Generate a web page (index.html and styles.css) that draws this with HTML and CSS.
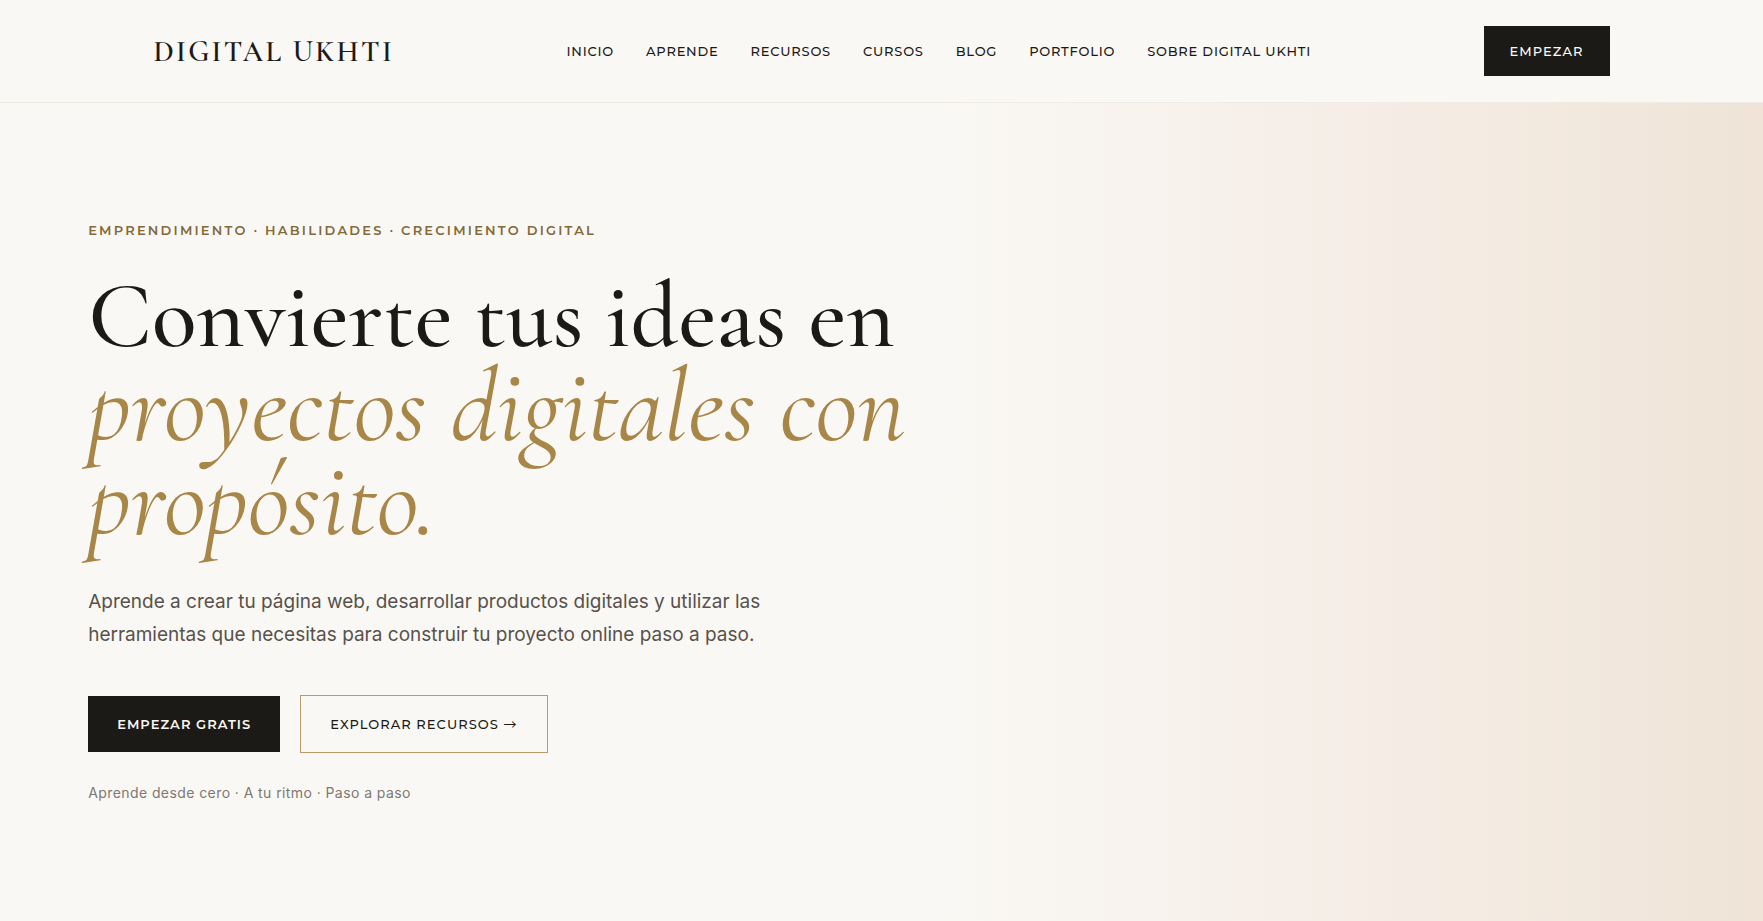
FILE: index.html
```html
<!DOCTYPE html>
<html lang="es">
<head>
  <meta charset="UTF-8">
  <meta name="viewport" content="width=device-width, initial-scale=1.0">
  <title>Digital Ukhti</title>
  <link rel="stylesheet" href="styles.css">
</head>
<body>

<header class="header">
  <div class="header-inner">
    <a class="logo" href="#">DIGITAL UKHTI</a>
    <nav class="nav">
      <a href="#">INICIO</a>
      <a href="#">APRENDE</a>
      <a href="#">RECURSOS</a>
      <a href="#">CURSOS</a>
      <a href="#">BLOG</a>
      <a href="#">PORTFOLIO</a>
      <a href="#">SOBRE DIGITAL UKHTI</a>
    </nav>
    <a class="btn btn-small" href="#">EMPEZAR</a>
  </div>
</header>

<main class="hero">
  <div class="hero-content">
    <p class="eyebrow">EMPRENDIMIENTO · HABILIDADES · CRECIMIENTO DIGITAL</p>
    <h1>Convierte tus ideas en <em>proyectos digitales con propósito.</em></h1>
    <p class="lead">Aprende a crear tu página web, desarrollar productos digitales y utilizar las herramientas que necesitas para construir tu proyecto online paso a paso.</p>
    <div class="actions">
      <a class="btn" href="#">EMPEZAR GRATIS</a>
      <a class="btn btn-outline" href="#">EXPLORAR RECURSOS <span class="arrow">→</span></a>
    </div>
    <p class="note">Aprende desde cero · A tu ritmo · Paso a paso</p>
  </div>
</main>

</body>
</html>
```

FILE: styles.css
```css
:root {
  --cream: #faf8f4;
  --ink: #1c1a17;
  --gold: #a88648;
  --serif: "Cormorant Garamond", "Liberation Serif", serif;
  --caps: Montserrat, Inter, sans-serif;
}
* {
  box-sizing: border-box;
  margin: 0;
  padding: 0;
}
body {
  display: flex;
  flex-direction: column;
  min-height: 100vh;
  background: var(--cream);
  color: var(--ink);
  font-family: Inter, sans-serif;
}
a {
  color: inherit;
  text-decoration: none;
}

/* Header */
.header {
  padding: 26px 5%;
  border-bottom: 1px solid #f0ebe3;
}
.header-inner {
  display: flex;
  align-items: center;
  justify-content: space-between;
  max-width: 1456px;
  margin: 0 auto;
}
.logo {
  font-family: var(--serif);
  font-size: 29px;
  font-weight: 600;
  letter-spacing: 0.08em;
}
.nav {
  display: flex;
  gap: 32px;
  font-family: var(--caps);
  font-size: 13px;
  font-weight: 500;
  letter-spacing: 0.06em;
}

/* Buttons */
.btn {
  padding: 20px 29px;
  background: var(--ink);
  color: var(--cream);
  font-family: var(--caps);
  font-size: 13px;
  font-weight: 600;
  line-height: 16px;
  letter-spacing: 0.08em;
}
.btn-small {
  padding: 17px 26px;
  font-weight: 500;
}
.btn-outline {
  border: 1px solid #b89b66;
  background: transparent;
  color: var(--ink);
  font-weight: 500;
}
.arrow {
  font-family: "Noto Sans CJK JP", sans-serif;
  font-weight: 400;
}

/* Hero */
.hero {
  flex: 1;
  display: flex;
  align-items: center;
  padding: 40px 5% 42px;
  background: linear-gradient(to right, var(--cream) 54%, #f5ede6 77%, #efe4d7 100%);
}
.hero-content {
  max-width: 900px;
}
.eyebrow {
  margin-bottom: 30px;
  color: #84693a;
  font-family: var(--caps);
  font-size: 13px;
  font-weight: 600;
  line-height: 20px;
  letter-spacing: 0.17em;
}
h1 {
  margin-bottom: 33px;
  font-family: var(--serif);
  font-size: 93px;
  font-weight: 500;
  line-height: 94px;
}
h1 em {
  color: var(--gold);
  font-size: 104px;
  font-weight: 400;
  line-height: 80px;
}
.lead {
  max-width: 680px;
  margin-bottom: 44px;
  color: #57524c;
  font-size: 19px;
  line-height: 33px;
}
.actions {
  display: flex;
  flex-wrap: wrap;
  align-items: center;
  gap: 20px;
  margin-bottom: 30px;
}
.note {
  color: #7d7973;
  font-size: 14px;
  line-height: 20px;
  letter-spacing: 0.03em;
}
```
